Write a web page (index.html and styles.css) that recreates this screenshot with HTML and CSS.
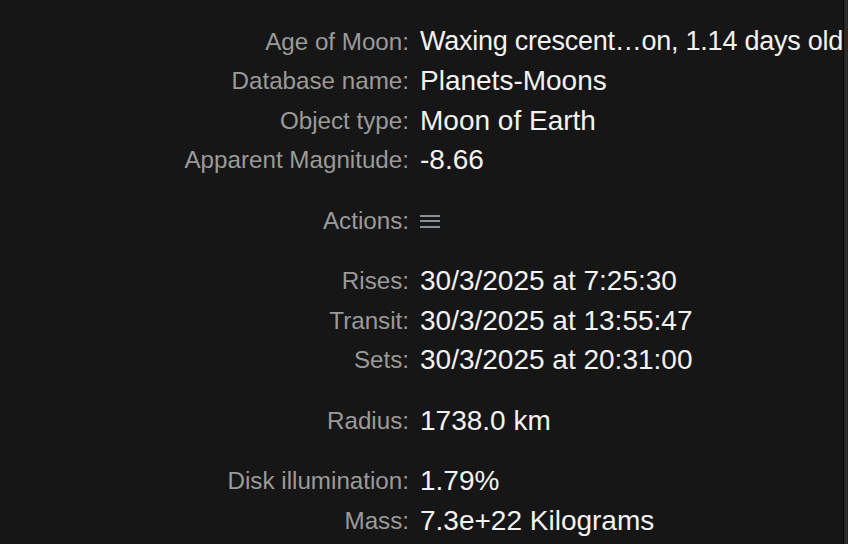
FILE: index.html
```html
<!DOCTYPE html>
<html>
<head>
<meta charset="utf-8">
<link rel="stylesheet" href="styles.css">
</head>
<body>
<div class="panel">
  <div class="group">
    <div class="row"><span class="label">Age of Moon:</span><span class="value value-tight">Waxing crescent…on, 1.14 days old</span></div>
    <div class="row"><span class="label">Database name:</span><span class="value">Planets-Moons</span></div>
    <div class="row"><span class="label">Object type:</span><span class="value">Moon of Earth</span></div>
    <div class="row"><span class="label">Apparent Magnitude:</span><span class="value">-8.66</span></div>
  </div>
  <div class="group">
    <div class="row"><span class="label">Actions:</span><span class="value"><svg class="menu-icon" width="20" height="14" viewBox="0 0 20 14"><rect x="0" y="1" width="20" height="2"/><rect x="0" y="6" width="20" height="2"/><rect x="0" y="12" width="20" height="2"/></svg></span></div>
  </div>
  <div class="group">
    <div class="row"><span class="label">Rises:</span><span class="value">30/3/2025 at 7:25:30</span></div>
    <div class="row"><span class="label">Transit:</span><span class="value">30/3/2025 at 13:55:47</span></div>
    <div class="row"><span class="label">Sets:</span><span class="value">30/3/2025 at 20:31:00</span></div>
  </div>
  <div class="group">
    <div class="row"><span class="label">Radius:</span><span class="value">1738.0 km</span></div>
  </div>
  <div class="group">
    <div class="row"><span class="label">Disk illumination:</span><span class="value">1.79%</span></div>
    <div class="row"><span class="label">Mass:</span><span class="value">7.3e+22 Kilograms</span></div>
  </div>
</div>
</body>
</html>
```
FILE: styles.css
```css
html, body {
  margin: 0;
  padding: 0;
  background: #2a2a2a;
  height: 100%;
  overflow: hidden;
}
.panel {
  width: 844px;
  height: 544px;
  background: #161616;
  border-right: 1px solid #050505;
  padding-top: 22px;
  box-sizing: border-box;
  font-family: "Liberation Sans", Arial, sans-serif;
  overflow: hidden;
}
.group {
  display: flex;
  flex-direction: column;
  margin-bottom: 21px;
}
.row {
  display: grid;
  grid-template-columns: 409px 1fr;
  column-gap: 11px;
  height: 39.5px;
  align-items: center;
  white-space: nowrap;
}
.label {
  text-align: right;
  color: #9a9a9a;
  font-size: 24.2px;
}
.value {
  color: #f2f2f2;
  font-size: 28px;
  overflow: hidden;
  display: flex;
  align-items: center;
}
.value-tight {
  font-size: 27px;
  letter-spacing: -0.25px;
}
.menu-icon {
  fill: #8a9196;
}
```
